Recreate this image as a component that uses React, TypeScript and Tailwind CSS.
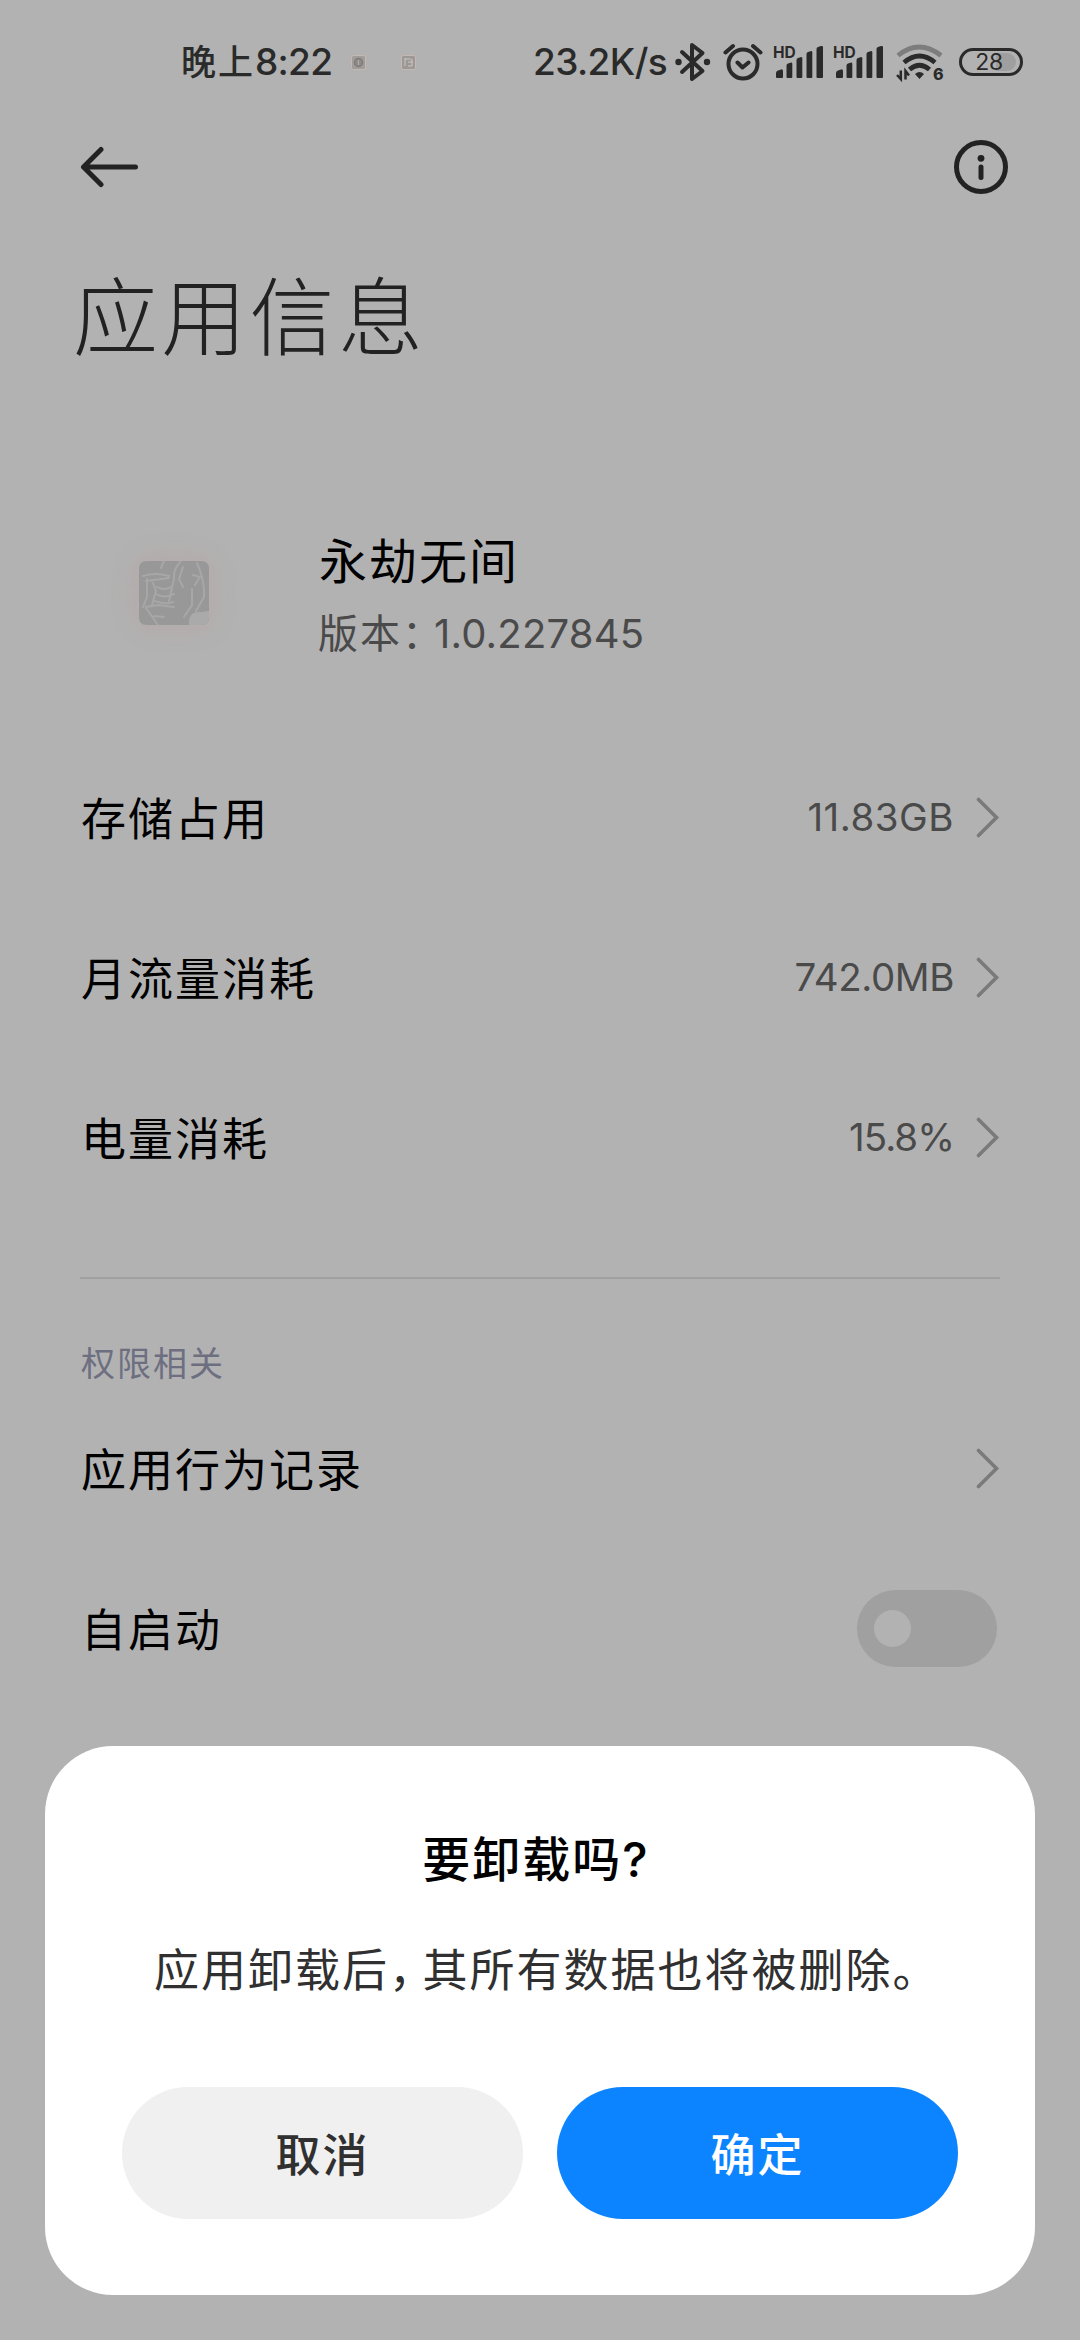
import type { ReactNode } from 'react'

function HdSignal() {
  return (
    <svg width="51" height="44" viewBox="0 0 51 44" fill="#2a2a2a">
      <text x="0" y="18" fontSize="15.500" fontWeight="700" fontFamily="Inter, sans-serif">HD</text>
      <g transform="translate(0 4)">
        <path d="M3 33v-4q0-2 2-2.600l3-1q2-.5 2 1.600v6q0 1-1 1h-5q-1 0-1-1z" />
        <path d="M13.500 33V21.500q0-1.500 1.500-2l2.500-.8q1.800-.4 1.800 1V33q0 1-1 1h-3.800q-1 0-1-1z" />
        <path d="M23.500 33V16q0-1.500 1.500-2l2.500-.8q1.800-.4 1.800 1V33q0 1-1 1h-3.800q-1 0-1-1z" />
        <path d="M33.500 33V10q0-1.500 1.500-2l2.500-.8q1.800-.4 1.800 1V33q0 1-1 1h-3.800q-1 0-1-1z" />
        <path d="M43.500 33V5q0-1.500 1.500-2l3-1Q50 1.600 50 3v30q0 1-1 1h-4.500q-1 0-1-1z" />
      </g>
    </svg>
  )
}

function Bluetooth() {
  return (
    <svg width="38" height="40" viewBox="0 0 38 40" fill="none" stroke="#2a2a2a" strokeWidth="4" strokeLinecap="round" strokeLinejoin="round">
      <path d="M8 10l20.500 19L18 37V3l10.500 8L8 30" />
      <circle cx="4.500" cy="20" r="3.200" fill="#2a2a2a" stroke="none" />
      <circle cx="33" cy="20" r="3.200" fill="#2a2a2a" stroke="none" />
    </svg>
  )
}

function Alarm() {
  return (
    <svg width="40" height="38" viewBox="0 0 40 38" fill="none" stroke="#2a2a2a" strokeWidth="4" strokeLinecap="round" strokeLinejoin="round">
      <circle cx="20" cy="21" r="14.500" />
      <path d="M14.500 19.500l5 5 6-5M2.500 9.500l7.500-6.500M37.500 9.500L30 3" />
    </svg>
  )
}

function Wifi() {
  return (
    <svg width="48" height="44" viewBox="0 0 48 44" fill="none" strokeWidth="4.800">
      <path d="M2 15.500q21-17 43 0" stroke="#7d7d7d" />
      <path d="M8 22.500q15.500-13 31 0" stroke="#2a2a2a" />
      <path d="M13.500 29.500q10-8.500 20 0" stroke="#2a2a2a" />
      <path d="M23.500 39l-4.500-5q4.500-4 9 0z" fill="#2a2a2a" />
      <path d="M4.800 30.500v8.500L1 35M9.500 39.500V31l3.500 4.500" stroke="#2a2a2a" strokeWidth="2.500" />
      <text x="37" y="39.500" fontSize="16" fontWeight="800" fill="#2a2a2a" fontFamily="Inter, sans-serif">6</text>
    </svg>
  )
}

function NoticeDot() {
  return (
    <svg width="15" height="15" viewBox="0 0 15 15">
      <rect x=".5" y=".5" width="14" height="14" rx="2" fill="#a09c9a" stroke="#c6b9b3" />
      <circle cx="7.500" cy="7.500" r="4" fill="#8f8b8a" stroke="#7f7c7b" strokeWidth="1.500" />
      <path d="M7.500 5v5" stroke="#b0acaa" />
    </svg>
  )
}

function NoticeFace() {
  return (
    <svg width="15" height="15" viewBox="0 0 15 15">
      <rect x=".5" y=".5" width="14" height="14" rx="2" fill="#9c9896" stroke="#c6b9b3" />
      <path d="M4 3v8M4 4h6M7 7h5M7 11h4M11 4v7" stroke="#cbc6c4" fill="none" />
    </svg>
  )
}

function StatusBar() {
  return (
    <div className="flex h-[124px] items-center pl-[181px] text-[#2a2a2a]">
      <div className="flex w-[152px] items-center whitespace-nowrap font-medium">
        <span className="text-[35px] tracking-[2px]">晚上</span>
        <span className="text-[37px] tracking-[-0.7px]">8:22</span>
      </div>
      <div className="ml-[18px] flex w-[65px] justify-between">
        <NoticeDot />
        <NoticeFace />
      </div>
      <span className="ml-[117px] w-[141px] whitespace-nowrap text-[37px] font-medium tracking-[-0.6px]">23.2K/s</span>
      <Bluetooth />
      <div className="ml-[11px]"><Alarm /></div>
      <div className="ml-[10px] flex gap-[9px]">
        <HdSignal />
        <HdSignal />
      </div>
      <div className="ml-[12px]"><Wifi /></div>
      <div className="ml-[15px] flex h-[28px] w-[64px] items-center justify-center rounded-full border-[3px] border-[#2a2a2a]">
        <div className="flex h-[18px] w-[50px] items-center justify-center rounded-full bg-gradient-to-r from-transparent from-60% to-[#9f9f9f] to-60% pr-[4px] text-[23px] leading-none tracking-[-0.5px]">28</div>
      </div>
    </div>
  )
}

function Chevron() {
  return (
    <svg width="24" height="42" viewBox="0 0 24 42" fill="none" stroke="#7a7a7a" strokeWidth="3.600" strokeLinecap="round" strokeLinejoin="miter">
      <path d="M2.500 3.500L20.500 21.500 2.500 39.500" />
    </svg>
  )
}

type RowProps = {
  label: string
  value?: string
  valueClass?: string
  children?: ReactNode
}

function Row({ label, value, valueClass = 'tracking-[-1px]', children }: RowProps) {
  return (
    <div className="flex h-[160px] items-center justify-between">
      <span className="ml-px mt-[6px] text-[45px] tracking-[2px] text-black">{label}</span>
      <div className="flex items-center gap-[22px]">
        {value && <span className={`mt-[2px] text-[38.5px] text-[#4a4a4a] ${valueClass}`}>{value}</span>}
        {children ?? <Chevron />}
      </div>
    </div>
  )
}

function AppIcon() {
  return (
    <div className="flex h-[64px] w-[70px] items-center justify-center rounded-2xl shadow-[0_0_18px_9px_rgba(185,160,155,0.3)]">
      <svg width="70" height="64" viewBox="0 0 70 64" fill="none">
        <path d="M8 0h54q8 0 8 8v48q0 8-8 8H8q-8 0-8-8V8q0-8 8-8z" fill="#989898" />
        <g stroke="#a7a7a7" strokeWidth="2" strokeLinecap="round">
          <path d="M4 15q12-4 26 0M7 20l23-3M8 18v18l-4 10M14 22l3 8-4 14M18 26q8 4 14 0M17 33q8 5 18 0M16 40q10 4 18 1M7 46l12-2 16 2M7 47l12 17M15 55l10 1" />
          <path d="M42 0q-8 8-7 18l-5 22M58 2q8 18 7 34l-8 14M54 14l7 2-5 8M44 6l-4 12 4 8M53 28v16l-8 12M25 0l-3 7" />
        </g>
        <path d="M50 64q-1-14 12-13l8-1v6q0 8-8 8z" fill="#aaaaaa" />
      </svg>
    </div>
  )
}

function ConfirmDialog() {
  return (
    <div className="absolute left-[45px] top-[1746px] flex h-[549px] w-[990px] flex-col rounded-[68px] bg-white px-[77px] pt-[78px]">
      <h2 className="flex h-[72px] items-center justify-center pr-[8px] text-[48px] font-medium tracking-[2px] text-black">
        要卸载吗<span>?</span>
      </h2>
      <p className="mt-[39px] flex h-[72px] items-center whitespace-nowrap pl-[32px] text-[45px] tracking-[2px] text-[#303030]">
        应用卸载后<span className="mr-[9px] [font-feature-settings:'halt']">，</span>其所有数据也将被删除。
      </p>
      <div className="mt-[80px] flex gap-[34px]">
        <button className="h-[132px] flex-1 rounded-[66px] bg-[#f0f0f0] pt-[5px] text-[45px] font-medium tracking-[2px] text-[#303030]">取消</button>
        <button className="h-[132px] flex-1 rounded-[66px] bg-[#0d84ff] pt-[5px] text-[45px] font-medium tracking-[2px] text-white">确定</button>
      </div>
    </div>
  )
}

export default function App() {
  return (
    <div lang="zh-CN" className="relative h-[2340px] w-[1080px] overflow-hidden bg-[#b2b2b2] font-['Inter','Noto_Sans_CJK_SC',sans-serif]">
      <StatusBar />

      <div className="flex h-[86px] items-center justify-between pl-[80px] pr-[71px]">
        <svg width="60" height="42" viewBox="0 0 60 42" fill="none" stroke="#222" strokeWidth="5" strokeLinecap="round" strokeLinejoin="round">
          <path d="M55.500 21H4M21 3.500L3.500 21 21 38.500" />
        </svg>
        <svg width="56" height="56" viewBox="0 0 56 56" fill="none" stroke="#222">
          <circle cx="28" cy="28" r="24.500" strokeWidth="5" />
          <circle cx="28" cy="19.300" r="3.400" fill="#222" stroke="none" />
          <path d="M28 28v10.500" strokeWidth="5" strokeLinecap="round" />
        </svg>
      </div>

      <h1 className="flex h-[212px] items-center pl-[73px] pt-[6px] text-[85px] font-light tracking-[3.3px] text-[#222]">应用信息</h1>

      {/* App summary */}
      <div className="flex h-[315px] pl-[139px] pt-[104px]">
        <div className="pt-[35px]"><AppIcon /></div>
        <div className="ml-[109px] flex flex-col">
          <span className="flex h-[72px] items-center pl-px text-[48px] tracking-[2px] text-black">永劫无间</span>
          <span className="flex h-[72px] items-center whitespace-nowrap text-[40px] tracking-[2px] text-[#4a4a4a]">
            版本：<span className="ml-[-10px] tracking-[0.2px]">1.0.227845</span>
          </span>
        </div>
      </div>

      <div className="px-[80px]">
        <Row label="存储占用" value="11.83GB" valueClass="tracking-[0.5px]" />
        <Row label="月流量消耗" value="742.0MB" valueClass="tracking-[-0.4px]" />
        <Row label="电量消耗" value="15.8%" />
        <div className="mt-[60px] h-[2px] bg-[#a0a0a0]" />
        <div className="flex h-[109px] items-end pl-px text-[34px] leading-[49px] tracking-[2px] text-[#6d6f81]">权限相关</div>
        <Row label="应用行为记录" />
        <Row label="自启动">
          <div className="mr-[3px] flex h-[77px] w-[140px] items-center rounded-full bg-[#a0a0a0] pl-[17px]">
            <div className="h-[37px] w-[37px] rounded-full bg-[#b2b2b2]" />
          </div>
        </Row>
      </div>

      <ConfirmDialog />
    </div>
  )
}
